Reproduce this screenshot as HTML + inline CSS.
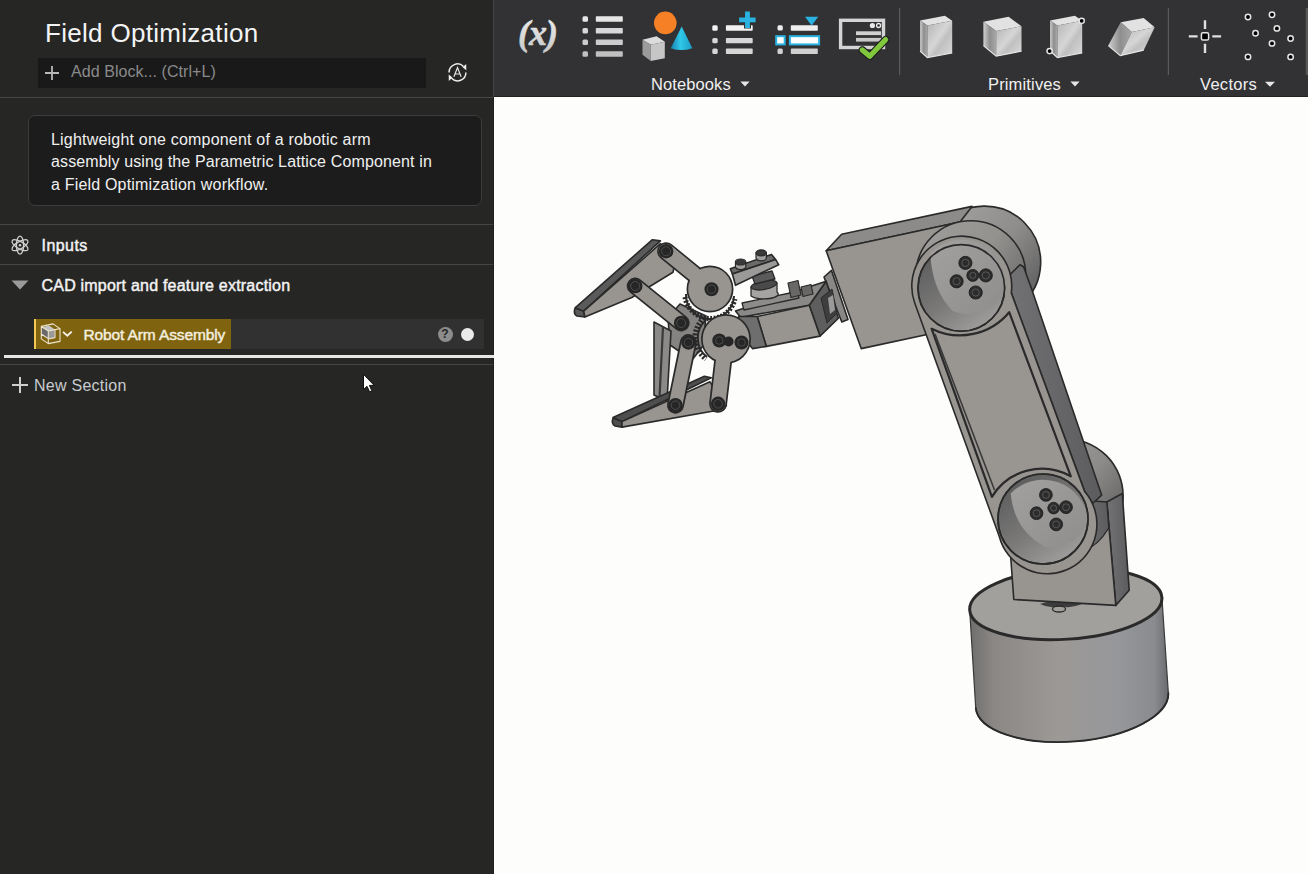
<!DOCTYPE html>
<html><head><meta charset="utf-8">
<style>
*{margin:0;padding:0;box-sizing:border-box}
html,body{width:1308px;height:874px;overflow:hidden;background:#fdfdfb;font-family:"Liberation Sans",sans-serif}
.abs{position:absolute}
#left{position:absolute;left:0;top:0;width:493px;height:874px;background:#262624}
#lborder{position:absolute;left:492.5px;top:97px;width:1.5px;height:777px;background:#1f1f1f}
#lborder2{position:absolute;left:493px;top:0;width:1px;height:97px;background:#444}
#tb{position:absolute;left:494px;top:0;width:814px;height:97px;background:#323234}
#view{position:absolute;left:494px;top:97px;width:814px;height:777px;background:#fdfdfb}
.hl{position:absolute;left:0;width:493px;height:1px;background:#454545}
.t{position:absolute;white-space:nowrap;color:#f2f2f2}
</style></head><body>
<div id="left">
  <div class="t m" style="left:45px;top:18px;font-size:26px;letter-spacing:0.3px;color:#f4f4f4">Field Optimization</div>
  <div class="abs" style="left:38px;top:58px;width:388px;height:30px;background:#191919"></div>
  <svg class="abs" style="left:44px;top:65px" width="16" height="16"><path d="M1 8H15M8 1V15" stroke="#b8b8b8" stroke-width="1.8"/></svg>
  <div class="t m" style="left:71px;top:63px;font-size:16px;letter-spacing:0.06px;color:#8a8a8a">Add Block... (Ctrl+L)</div>
  <svg class="abs" style="left:444px;top:60px" width="28" height="26" viewBox="444 60 28 26">
    <path d="M449.1 72.4 A8.4 8.4 0 0 1 463.5 66.5" fill="none" stroke="#ececec" stroke-width="1.5"/>
    <path d="M465.9 72.4 A8.4 8.4 0 0 1 451.5 78.3" fill="none" stroke="#ececec" stroke-width="1.5"/>
    <path d="M462.6 67.2 L466.2 63.9 L466.3 70.3 Z M452.4 77.6 L448.8 80.9 L448.7 74.6 Z" fill="#f2f2f2"/>
    <path d="M453.9 76.8 L457.5 67.6 L461.1 76.8 M455.1 74 H459.9" fill="none" stroke="#e6e6e6" stroke-width="1.2"/>
  </svg>
  <div class="hl" style="top:97px"></div>
  <div class="abs" style="left:28px;top:115px;width:454px;height:91px;background:#1c1c1c;border:1px solid #3c3c3c;border-radius:7px"></div>
  <div class="t m" style="left:51px;top:131px;font-size:16px;letter-spacing:0.2px;color:#f0f0f0">Lightweight one component of a robotic arm</div>
  <div class="t m" style="left:51px;top:153px;font-size:16px;letter-spacing:0.13px;color:#f0f0f0">assembly using the Parametric Lattice Component in</div>
  <div class="t m" style="left:51px;top:175.5px;font-size:16px;letter-spacing:0.19px;color:#f0f0f0">a Field Optimization workflow.</div>
  <div class="hl" style="top:224px"></div>
  <svg class="abs" style="left:10px;top:235px" width="20" height="20" viewBox="0 0 20 20">
    <g fill="none" stroke="#cfcfcf" stroke-width="1.3">
      <ellipse cx="10" cy="10.2" rx="9" ry="3.6" transform="rotate(90 10 10.2)"/>
      <ellipse cx="10" cy="10.2" rx="9" ry="3.6" transform="rotate(30 10 10.2)"/>
      <ellipse cx="10" cy="10.2" rx="9" ry="3.6" transform="rotate(150 10 10.2)"/>
    </g>
    <circle cx="10" cy="10.2" r="1.3" fill="#cfcfcf"/>
  </svg>
  <div class="t m" style="left:41.5px;top:237px;font-size:16px;letter-spacing:0.45px;-webkit-text-stroke:0.45px #f2f2f2;color:#f2f2f2">Inputs</div>
  <div class="hl" style="top:264px"></div>
  <svg class="abs" style="left:11px;top:280px" width="18" height="10"><path d="M0.5 0.5H17.5L9 9.5Z" fill="#9a9a9a"/></svg>
  <div class="t m" style="left:41.5px;top:277px;font-size:16px;letter-spacing:0.21px;-webkit-text-stroke:0.45px #f2f2f2;color:#f2f2f2">CAD import and feature extraction</div>
  <div class="abs" style="left:34px;top:319px;width:450px;height:30px;background:#313131"></div>
  <div class="abs" style="left:34px;top:319px;width:197px;height:30px;background:#7f630f;border-left:2px solid #f2c955"></div>
  <svg class="abs" style="left:34px;top:318px" width="46" height="32" viewBox="34 318 46 32">
    <path d="M41.5 327.5 L48.5 331 L48.5 339 L41.5 335.5 Z" fill="#6a6a6a"/>
    <path d="M41.5 327.5 L49 325.5 L55 329.5 L48.5 331 Z" fill="#c4c4c4"/>
    <path d="M48.5 331 L54.5 329.5 L54.5 337.5 L48.5 339 Z" fill="#9a9a9a"/>
    <path d="M41.3 326.4 L53 323.9 L60 328.6 L60 341.4 L48.3 343.6 L41.3 338.9 Z M41.3 326.4 L48.3 331 L60 328.6 M48.3 331 L48.3 343.6 M48.3 331 L55 329.6 L55 337.6 L48.3 339 M41.3 334 L48.3 338.6" fill="none" stroke="#ece4cc" stroke-width="1.1" stroke-linejoin="round"/>
    <path d="M63 331.9 L67.3 335.8 L71.7 331.6" fill="none" stroke="#f4f0e6" stroke-width="1.9"/>
  </svg>
  <div class="t m" style="left:83.5px;top:325.5px;font-size:15.5px;letter-spacing:-0.12px;-webkit-text-stroke:0.45px #f4eedf;color:#f4eedf">Robot Arm Assembly</div>
  <div class="abs" style="left:437.5px;top:326.5px;width:15px;height:15px;border-radius:50%;background:#8c8c8c;color:#262626;font-size:12px;font-weight:bold;text-align:center;line-height:15px">?</div>
  <div class="abs" style="left:461px;top:327.5px;width:13px;height:13px;border-radius:50%;background:#ebebeb"></div>
  <div class="abs" style="left:4px;top:355px;width:490px;height:2.6px;background:#e6e6e6;z-index:5"></div>
  <div class="hl" style="top:364px"></div>
  <svg class="abs" style="left:12px;top:377px" width="16" height="16"><path d="M0 8H16M8 0V16" stroke="#cfcfcf" stroke-width="2"/></svg>
  <div class="t m" style="left:34px;top:377px;font-size:16px;letter-spacing:0.26px;color:#c8ccd0">New Section</div>
  <svg class="abs" style="left:361px;top:372px" width="16" height="22" viewBox="0 0 16 22">
    <path d="M2.5 2.3 L2.5 17.6 L6 14.3 L8.6 19.8 L10.9 18.8 L8.4 13.4 L13.2 13.4 Z" fill="#fff" stroke="#111" stroke-width="1" stroke-linejoin="round"/>
  </svg>
</div>
<div id="lborder"></div><div id="lborder2"></div>
<div id="tb">
<svg width="814" height="97" viewBox="494 0 814 97" style="position:absolute;left:0;top:0">
  <defs>
    <linearGradient id="gx" x1="0" y1="0" x2="0" y2="1"><stop offset="0" stop-color="#f0f0f0"/><stop offset="1" stop-color="#c8c8c8"/></linearGradient>
    <linearGradient id="gfront" x1="0" y1="0" x2="1" y2="1"><stop offset="0" stop-color="#b4b4b4"/><stop offset="0.45" stop-color="#d6d6d6"/><stop offset="0.6" stop-color="#c0c0c0"/><stop offset="1" stop-color="#dadada"/></linearGradient>
    <linearGradient id="gleft" x1="0" y1="0" x2="1" y2="0"><stop offset="0" stop-color="#d0d0d0"/><stop offset="0.5" stop-color="#8e8e8e"/><stop offset="1" stop-color="#a8a8a8"/></linearGradient>
    <linearGradient id="gcone" x1="0" y1="0" x2="1" y2="0"><stop offset="0" stop-color="#1a7fb0"/><stop offset="0.45" stop-color="#30c8e8"/><stop offset="1" stop-color="#1c9cc8"/></linearGradient>
  </defs>
  <!-- (x) -->
  <text x="518" y="45" font-family="Liberation Serif" font-style="italic" font-weight="bold" font-size="36" letter-spacing="-1" stroke="url(#gx)" stroke-width="0.6" fill="url(#gx)">(x)</text>
  <!-- list -->
  <g fill="#e6e6e6">
    <rect x="582.5" y="16.3" width="5.5" height="5.5" rx="1.5"/><rect x="595.8" y="16.3" width="27" height="5.5" rx="0.8"/>
  </g>
  <g fill="#d8d8d8">
    <rect x="582.5" y="28" width="5.5" height="5.5" rx="1.5"/><rect x="595.8" y="28" width="27" height="5.5" rx="0.8"/>
  </g>
  <g fill="#cccccc">
    <rect x="582.5" y="39.6" width="5.5" height="5.5" rx="1.5"/><rect x="595.8" y="39.6" width="27" height="5.5" rx="0.8"/>
  </g>
  <g fill="#c0c0c0">
    <rect x="582.5" y="51.2" width="5.5" height="5.5" rx="1.5"/><rect x="595.8" y="51.2" width="27" height="5.5" rx="0.8"/>
  </g>
  <!-- shapes -->
  <circle cx="665.3" cy="22.9" r="11.3" fill="#f58026"/>
  <path d="M642.5 39.7L656.6 36.2L664.8 41.7L650.8 44.8Z" fill="#dcdcdc"/>
  <path d="M642.5 39.7L650.8 44.8L650.8 60.9L642.5 54.8Z" fill="#9a9a9a"/>
  <path d="M650.8 44.8L664.8 41.7L664.8 58.2L650.8 60.9Z" fill="#c6c6c6"/>
  <path d="M681.7 26.6L692.3 48.2Q681.5 52 670.7 48.2Z" fill="url(#gcone)"/>
  <!-- list plus -->
  <g fill="#f2f2f2"><rect x="712.3" y="25.3" width="5.4" height="5.4" rx="1.5"/><rect x="725.9" y="25.3" width="26.8" height="5.4" rx="0.8"/></g>
  <g fill="#d6d6d6"><rect x="712.3" y="37.9" width="5.4" height="5.4" rx="1.5"/><rect x="725.9" y="37.9" width="26.8" height="5.4" rx="0.8"/>
  <rect x="712.3" y="48.6" width="5.4" height="5.4" rx="1.5"/><rect x="725.9" y="48.6" width="26.8" height="5.4" rx="0.8"/></g>
  <path d="M747.5 11.5V28.5M739 19.8H755.8" stroke="#323234" stroke-width="7"/>
  <path d="M747.5 11.5V28M739.1 19.8H755.6" stroke="#2ab2e2" stroke-width="4.8"/>
  <!-- list insert -->
  <g fill="#eeeeee"><rect x="777.5" y="25.3" width="5.3" height="5.3" rx="1.5"/><rect x="790.8" y="25.3" width="27" height="5.4" rx="0.8"/></g>
  <g fill="#d0d0d0"><rect x="777.5" y="48.6" width="5.3" height="5.3" rx="1.5"/><rect x="790.8" y="48.6" width="27" height="5.4" rx="0.8"/></g>
  <rect x="776.2" y="36.2" width="8.5" height="8.2" fill="#ffffff" stroke="#2ab2e2" stroke-width="2"/>
  <rect x="789.9" y="36.2" width="29.2" height="8.2" fill="#ffffff" stroke="#2ab2e2" stroke-width="2"/>
  <path d="M805 16.8H818.3L811.6 25.5Z" fill="#2ab2e2"/>
  <!-- check doc -->
  <rect x="840.6" y="20.3" width="42.9" height="27.2" fill="none" stroke="#d4d4d4" stroke-width="3.4"/>
  <circle cx="872.4" cy="25.5" r="2.6" fill="#e8e8e8"/>
  <circle cx="878.6" cy="25.5" r="2" fill="none" stroke="#e8e8e8" stroke-width="1.3"/>
  <rect x="856" y="31.3" width="25" height="3.8" fill="#d0d0d0"/>
  <rect x="856" y="37.9" width="25" height="3.7" fill="#c8c8c8"/>
  <path d="M862.3 49.9L869.8 56.3L885.6 39.6" fill="none" stroke="#1e1e1e" stroke-width="7.4" stroke-linecap="round" stroke-linejoin="round"/>
  <path d="M862.3 49.9L869.8 56.3L885.6 39.6" fill="none" stroke="#80c83c" stroke-width="5.2" stroke-linecap="round" stroke-linejoin="round"/>
  <rect x="899" y="8" width="1.2" height="67" fill="#575b60"/>
  <!-- box1 -->
  <path d="M920.1 20.4L944.9 15.8L952.2 20.8L927.4 25.4Z" fill="#e2e2e2"/>
  <path d="M920.1 20.4L927.4 25.4L927.4 57.5L920.1 51.1Z" fill="url(#gleft)"/>
  <path d="M927.4 25.4L952.2 20.8L952.2 53L927.4 57.5Z" fill="url(#gfront)"/>
  <path d="M920.1 51.1L927.4 57.5L952.2 53" fill="none" stroke="#e6e6e6" stroke-width="1.2"/>
  <!-- box2 -->
  <path d="M983.4 21.8L1008.6 16.7L1021.5 26.3L996.2 30.9Z" fill="#e2e2e2"/>
  <path d="M983.4 21.8L996.2 30.9L996.2 56.2L983.4 45.6Z" fill="url(#gleft)"/>
  <path d="M996.2 30.9L1021.5 26.3L1021.5 51.1L996.2 56.2Z" fill="url(#gfront)"/>
  <path d="M983.4 45.6L996.2 56.2L1021.5 51.1" fill="none" stroke="#e6e6e6" stroke-width="1.2"/>
  <!-- box3 -->
  <path d="M1050.1 20.4L1074.9 15.8L1082.2 20.8L1057.4 25.4Z" fill="#e2e2e2"/>
  <path d="M1050.1 20.4L1057.4 25.4L1057.4 57.5L1050.1 51.1Z" fill="url(#gleft)"/>
  <path d="M1057.4 25.4L1082.2 20.8L1082.2 53L1057.4 57.5Z" fill="url(#gfront)"/>
  <path d="M1050.1 51.1L1057.4 57.5L1082.2 53" fill="none" stroke="#e6e6e6" stroke-width="1.2"/>
  <circle cx="1081.7" cy="20.8" r="2.6" fill="#000" stroke="#e8e8e8" stroke-width="1.4"/>
  <circle cx="1049.6" cy="51.1" r="2.6" fill="#000" stroke="#e8e8e8" stroke-width="1.4"/>
  <!-- box4 -->
  <path d="M1120.7 22.2L1143.7 18.1L1154.7 27.3L1131.7 31.9Z" fill="#e2e2e2"/>
  <path d="M1108.3 45.6L1120.7 22.2L1131.7 31.9L1120.3 55.7Z" fill="url(#gleft)"/>
  <path d="M1131.7 31.9L1154.7 27.3L1143.7 50.2L1120.3 55.7Z" fill="url(#gfront)"/>
  <path d="M1108.3 45.6L1120.3 55.7L1143.7 50.2" fill="none" stroke="#e6e6e6" stroke-width="1.2"/>
  <rect x="1167.8" y="8" width="1.2" height="67" fill="#575b60"/>
  <!-- point -->
  <rect x="1201.4" y="32.8" width="7.2" height="7.2" rx="1.6" fill="#000" stroke="#e6e6e6" stroke-width="1.5"/>
  <path d="M1188.8 36.4H1197.6M1212.3 36.4H1221.1M1205 20.2V29M1205 43.7V53" stroke="#e0e0e0" stroke-width="2.4"/>
  <g fill="#000" stroke="#e6e6e6" stroke-width="1.5">
    <circle cx="1248" cy="17" r="2.7"/><circle cx="1272" cy="14.7" r="2.7"/><circle cx="1276.9" cy="28.4" r="2.7"/>
    <circle cx="1255.5" cy="33.2" r="2.7"/><circle cx="1290.6" cy="38.5" r="2.7"/><circle cx="1272" cy="43.4" r="2.7"/>
    <circle cx="1248" cy="56.9" r="2.7"/><circle cx="1290.6" cy="56.9" r="2.7"/>
  </g>
  <rect x="1305.7" y="8" width="2.3" height="67" fill="#585858"/>
  <!-- dropdown triangles -->
  <path d="M740.4 81.5H749.6L745 86.5Z M1070.4 81.5H1079.6L1075 86.5Z M1265 81.7H1275L1270 86.7Z" fill="#e6e6e6"/>
  <rect x="494" y="96" width="814" height="1" fill="#222"/>
</svg>
<div class="t m" style="left:157px;top:75px;font-size:16.5px;letter-spacing:0.1px;color:#f0f0f0">Notebooks</div>
<div class="t m" style="left:494px;top:75px;font-size:16.5px;letter-spacing:0.15px;color:#f0f0f0">Primitives</div>
<div class="t m" style="left:706px;top:75px;font-size:16.5px;letter-spacing:0.3px;color:#f0f0f0">Vectors</div>
</div>
<div id="view">
<svg width="814" height="777" viewBox="494 97 814 777" style="position:absolute;left:0;top:0">
<defs>
  <linearGradient id="gbase" x1="0" y1="0" x2="1" y2="0">
    <stop offset="0" stop-color="#6f6e6d"/><stop offset="0.12" stop-color="#8a8784"/><stop offset="0.45" stop-color="#9c9996"/><stop offset="0.75" stop-color="#96979b"/><stop offset="0.93" stop-color="#8a8b8f"/><stop offset="1" stop-color="#6a6b6e"/>
  </linearGradient>
  <linearGradient id="gcyl" x1="0.1" y1="0.1" x2="0.95" y2="0.8">
    <stop offset="0" stop-color="#a6a4a2"/><stop offset="0.55" stop-color="#8e8c8a"/><stop offset="1" stop-color="#5a5a5b"/>
  </linearGradient>
  <linearGradient id="grim" x1="0" y1="0" x2="1" y2="0.6">
    <stop offset="0" stop-color="#a09e9c"/><stop offset="0.6" stop-color="#94928f"/><stop offset="1" stop-color="#6c6c6c"/>
  </linearGradient>
  <linearGradient id="gside" x1="0" y1="0" x2="1" y2="0">
    <stop offset="0" stop-color="#727274"/><stop offset="1" stop-color="#5c5c5e"/>
  </linearGradient>
  <linearGradient id="gwall" x1="0" y1="0" x2="0.7" y2="1">
    <stop offset="0" stop-color="#555556"/><stop offset="0.6" stop-color="#7a7978"/><stop offset="1" stop-color="#a09e9c"/>
  </linearGradient>
  <linearGradient id="gfloor" x1="0" y1="0" x2="1" y2="1">
    <stop offset="0" stop-color="#a3a19f"/><stop offset="1" stop-color="#8f8d8b"/>
  </linearGradient>
</defs>
<g stroke="#2a2a2a" stroke-width="1.6" stroke-linejoin="round">
  <!-- BASE -->
  <path d="M969.7 610.2 L975.7 707.6 A96.5 41.5 -4.5 0 0 1168.3 692.4 L1161.9 597.4 Z" fill="url(#gbase)" stroke="none"/>
  <path d="M969.7 610.2 L975.7 707.6 A96.5 41.5 -4.5 0 0 1168.3 692.4 L1161.9 597.4" fill="none" stroke-width="1.2" stroke="#3a3a3a"/>
  <path d="M975.7 707.6 A96.5 41.5 -4.5 0 0 1168.3 692.4" fill="none" stroke-width="1.8"/>
  <ellipse cx="1065.8" cy="603.8" rx="96.3" ry="35.4" transform="rotate(-3.8 1065.8 603.8)" fill="#a2a09d" stroke-width="3"/>
  <path d="M1040 604 Q1050 600 1060 603 Q1070 600 1082 604 Q1070 609 1060 606 Q1050 609 1040 604Z" fill="#3c3c3c" stroke="none"/>
  <ellipse cx="1059" cy="609" rx="6.5" ry="3" fill="none" stroke-width="1.3"/>
  <!-- elbow motor cylinder -->
  <path d="M1081.1 554.3 L1097.3 543.6 A57 57 0 1 0 1018.4 464.7 L1007.7 480.9 A53 53 0 0 0 1081.1 554.3Z" fill="url(#gcyl)"/>
  <!-- lower bracket -->
  <path d="M1106.8 502 L1122.3 493.5 L1129.2 590.3 L1115.8 605.4 Z" fill="url(#gside)"/>
  <path d="M1008 520 L1106.8 502 L1115.8 605.4 L1013.8 599.5 Z" fill="#989591"/>
  <path d="M1080 500 L1106.8 502 L1108.8 528 Q1098 546 1082 552 Z" fill="url(#gside)" stroke-width="1.3"/>
  <!-- SHOULDER motor cylinder -->
  <path d="M1007.1 317.0 L1021.4 304.4 A56 56 0 1 0 943.2 224.5 L930.3 238.5 A55 55 0 0 0 1007.1 317.0Z" fill="url(#gcyl)"/>
  <!-- upper block -->
  <path d="M826.2 250.8 L841.6 234.3 L972 206.4 L960 222 Z" fill="#8d8b89"/>
  <path d="M826.2 250.8 L960 222 L990 300 L940 331.7 L861.2 348.6 Z" fill="#989591"/>
  <circle cx="970.8" cy="275.7" r="55" fill="url(#grim)"/>
  <!-- LINK side face -->
  <path d="M1008 276.7 L1020 264.7 L1023.7 267 L1032 290 L1101.7 495.2 L1092 504 L1084.6 491.4 L1011.3 293 Z" fill="url(#gside)"/>
  <!-- LINK front face -->
  <path d="M914.8 303.3 A50 50 0 1 1 1011.3 293 L1084.6 491.4 A49.6 49.6 0 1 1 999.3 536.5 Z" fill="#989591"/>
  <!-- channel -->
  <path d="M931.6 328.7 A64 64 0 0 0 1009.2 312.2 L1070.8 476.3 A58.7 58.7 0 0 0 991.9 496.9 Z" fill="#999692" stroke-width="2.2"/>
  <path d="M935 334 L994.5 490" fill="none" stroke-width="1.6" stroke="#3a3a3a"/>
  <!-- shoulder hub -->
  <circle cx="961.3" cy="287.9" r="43.3" fill="url(#gwall)"/>
  <path d="M930.3 253.7 A43.3 43.3 0 0 1 1004.6 291 A40 40 0 0 1 952.6 311 Q932 290 930.3 253.7Z" fill="url(#gfloor)" stroke="none"/>
  <circle cx="961.3" cy="287.9" r="43.3" fill="none"/>
  <!-- elbow hub -->
  <circle cx="1043" cy="519" r="45" fill="url(#gwall)"/>
  <path d="M1010.7 493.5 A45 45 0 0 1 1088 521 A40 40 0 0 1 1045 546.7 Q1014 530 1010.7 493.5Z" fill="url(#gfloor)" stroke="none"/>
  <circle cx="1043" cy="519" r="45" fill="none"/>
</g>
<!-- screws -->
<g fill="#2c2c2c" stroke="#1a1a1a" stroke-width="0.8">
  <circle cx="965.4" cy="262.9" r="6.6"/><circle cx="956.6" cy="281.3" r="6.6"/><circle cx="985.8" cy="275.4" r="6.6"/><circle cx="975.7" cy="292.5" r="6.6"/><circle cx="972.8" cy="275.4" r="6"/>
  <circle cx="1045.9" cy="494.9" r="6.4"/><circle cx="1036.5" cy="513.2" r="6.4"/><circle cx="1066" cy="507.2" r="6.4"/><circle cx="1056.2" cy="524.4" r="6.4"/><circle cx="1053.6" cy="508.1" r="5.8"/>
</g>
<g fill="none" stroke="#6a6a6a" stroke-width="0.7">
  <circle cx="965.4" cy="262.9" r="3.6"/><circle cx="956.6" cy="281.3" r="3.6"/><circle cx="985.8" cy="275.4" r="3.6"/><circle cx="975.7" cy="292.5" r="3.6"/><circle cx="972.8" cy="275.4" r="3"/>
  <circle cx="1045.9" cy="494.9" r="3.4"/><circle cx="1036.5" cy="513.2" r="3.4"/><circle cx="1066" cy="507.2" r="3.4"/><circle cx="1056.2" cy="524.4" r="3.4"/><circle cx="1053.6" cy="508.1" r="3"/>
</g>
<g stroke="#2a2a2a" stroke-width="1.6" stroke-linejoin="round">
  <!-- connector flange -->
  <path d="M824 277 L831.5 270.4 L848 319.5 L841.8 322 Z" fill="#8a8886"/>
  <!-- servo -->
  <path d="M809.2 305.2 L826.1 281.2 L838.4 318.3 L820 336.1 Z" fill="#5e5e5f"/>
  <path d="M821 298 L832 289 L837 313 L827 323 Z" fill="#3e3e3e" stroke-width="1"/>
  <path d="M828 298 L833 295 L835 310 L830 314 Z" fill="#9a9a9a" stroke="none"/>
  <path d="M735.5 311.1 L826.1 281.2 L809.2 305.2 L740.6 317.3 Z" fill="#8b8987"/>
  <path d="M757.2 316.5 L809.2 305.2 L820 336.1 L766.3 346.4 Z" fill="#989591"/>
  <path d="M738.5 316.5 L757.2 316.5 L766.3 346.4 L752.6 348.6 Q742 338 738.5 316.5 Z" fill="#6e6e6e"/>
  <path d="M742 303 L797 291.5 L799 298 L744 310 Z" fill="#8e8c8a" stroke-width="1.3"/>
  <path d="M788 283 L798 280.5 L801 295 L791 297.5 Z M801 287 L811 284.5 L813 294 L803 296.5 Z" fill="#6a6866" stroke-width="1.2"/>
  <path d="M751 287 L751 296 A13 4.5 0 0 0 777 292 L777 283 Z" fill="#a6a4a2" stroke-width="1.3"/>
  <ellipse cx="764" cy="285" rx="13" ry="4.5" transform="rotate(-10 764 285)" fill="#4a4a4a" stroke-width="1.3"/>
  <path d="M752 276 L772 271 L775 279 L755 284 Z" fill="#5a5a5a" stroke-width="1.3"/>
  <!-- bracket bar -->
  <path d="M730.3 268.8 L771.5 254.4 L775.6 259.6 L732.4 274 Z" fill="#6a6a6a"/>
  <path d="M732.4 274 L775.6 259.6 L778.7 264.7 L735.5 285.3 Z" fill="#9c9a98"/>
  <path d="M735.5 262 L735.5 267 A5.2 3 0 0 0 745.8 267 L745.8 262 Z" fill="#a09e9c" stroke-width="1.2"/>
  <ellipse cx="740.6" cy="262" rx="5.2" ry="3" fill="#3a3a3a" stroke-width="1.2"/>
  <path d="M756 252.8 L756 257.8 A5.2 3 0 0 0 766.4 257.8 L766.4 252.8 Z" fill="#a09e9c" stroke-width="1.2"/>
  <ellipse cx="761.2" cy="252.8" rx="5.2" ry="3" fill="#3a3a3a" stroke-width="1.2"/>
  <!-- gripper base plate -->
  <path d="M668 318 L680 304 L706 316 L703 346 L692 360 L670 345 Z" fill="#858381"/>
</g>
<!-- gear teeth -->
<g fill="none" stroke="#2a2a2a">
  <path d="M685 297 A25.5 25.5 0 0 0 735 299" stroke-width="5" stroke-dasharray="2 1.6"/>
  <path d="M686 294 A24 24 0 0 0 734 296" stroke-width="2"/>
  <path d="M704 318 A26 26 0 0 0 706 359" stroke-width="5" stroke-dasharray="2 1.6"/>
  <path d="M706 320 A24 24 0 0 0 707 357" stroke-width="2"/>
</g>
<g stroke-linecap="round" fill="none">
  <!-- upper finger -->
  <path d="M575.1 307.8 L652.4 239.7 L660.4 240.9 L583.7 311.2 Z M575.1 308 Q573 314 577 316 L584.9 316.9 L583.7 311.2Z" fill="#5a5a5a" stroke="#2a2a2a" stroke-width="1.6" stroke-linejoin="round"/>
  <path d="M583.7 311.2 L660.4 243.7 L675 262 L673 272.3 L631.8 297.5 L584.9 316.9 Z" fill="#989591" stroke="#2a2a2a" stroke-width="1.6" stroke-linejoin="round"/>
  <!-- link 2 -->
  <path d="M635.2 286 L681.2 323" stroke="#2a2a2a" stroke-width="17"/>
  <path d="M635.2 286 L681.2 323" stroke="#989591" stroke-width="13.5"/>
  <!-- upper gear arm -->
  <path d="M666.1 251.2 L705 283" stroke="#2a2a2a" stroke-width="18"/>
  <path d="M666.1 251.2 L705 283" stroke="#989591" stroke-width="14.5"/>
  <circle cx="710" cy="289" r="23.5" fill="#2a2a2a"/>
  <circle cx="710" cy="289" r="21.8" fill="#989591"/>
  <path d="M666.1 251.2 L705 283" stroke="#989591" stroke-width="14.5"/>
  <!-- dark vertical plate -->
  <path d="M654 322 L671 331 L667 401 L654 395 Z" fill="#8c8a88" stroke="#2a2a2a" stroke-width="1.6" stroke-linejoin="round"/>
  <path d="M663 327 L659.5 397" stroke="#3a3a3a" stroke-width="2.2"/>
  <!-- lower finger -->
  <path d="M613 417.5 L704.4 376.3 L711.3 377.7 L622 421.6 Z M613 418 Q611 424 615 426 L622 427.1 L622 421.6Z" fill="#4e4e4e" stroke="#2a2a2a" stroke-width="1.6" stroke-linejoin="round"/>
  <path d="M622 421.6 L710 381.8 L719.5 397 L726.4 405.2 L723.6 409.3 L622 427.1 Z" fill="#989591" stroke="#2a2a2a" stroke-width="1.6" stroke-linejoin="round"/>
  <!-- link A -->
  <path d="M688.4 342.5 L675.5 405.2" stroke="#2a2a2a" stroke-width="17"/>
  <path d="M688.4 342.5 L675.5 405.2" stroke="#989591" stroke-width="13.5"/>
  <!-- lower gear + arm B -->
  <path d="M725 345 L718.1 403.8" stroke="#2a2a2a" stroke-width="18"/>
  <circle cx="726" cy="339" r="25" fill="#2a2a2a"/>
  <circle cx="726" cy="339" r="23.3" fill="#989591"/>
  <path d="M725 345 L718.1 403.8" stroke="#989591" stroke-width="14.5"/>
</g>
<!-- gripper screws -->
<g fill="#262626">
  <circle cx="666.1" cy="251.2" r="7.3"/><circle cx="635.2" cy="286" r="7.3"/><circle cx="681.2" cy="323" r="7.3"/>
  <circle cx="711.5" cy="289.2" r="7"/><circle cx="688.4" cy="342.5" r="7.2"/>
  <circle cx="719.3" cy="340.5" r="7"/><circle cx="728.6" cy="341.5" r="5"/><circle cx="741.5" cy="342.5" r="7"/>
  <circle cx="675.5" cy="405.2" r="7.2"/><circle cx="718.1" cy="403.8" r="7.2"/>
</g>
<g fill="none" stroke="#5a5a5a" stroke-width="0.7">
  <circle cx="666.1" cy="251.2" r="4.5"/><circle cx="635.2" cy="286" r="4.5"/><circle cx="681.2" cy="323" r="4.5"/>
  <circle cx="711.5" cy="289.2" r="4.2"/><circle cx="688.4" cy="342.5" r="4.3"/>
  <circle cx="719.3" cy="340.5" r="3.8"/><circle cx="741.5" cy="342.5" r="3.8"/>
  <circle cx="675.5" cy="405.2" r="4.3"/><circle cx="718.1" cy="403.8" r="4.3"/>
</g>
</svg>
</div>
</body></html>
